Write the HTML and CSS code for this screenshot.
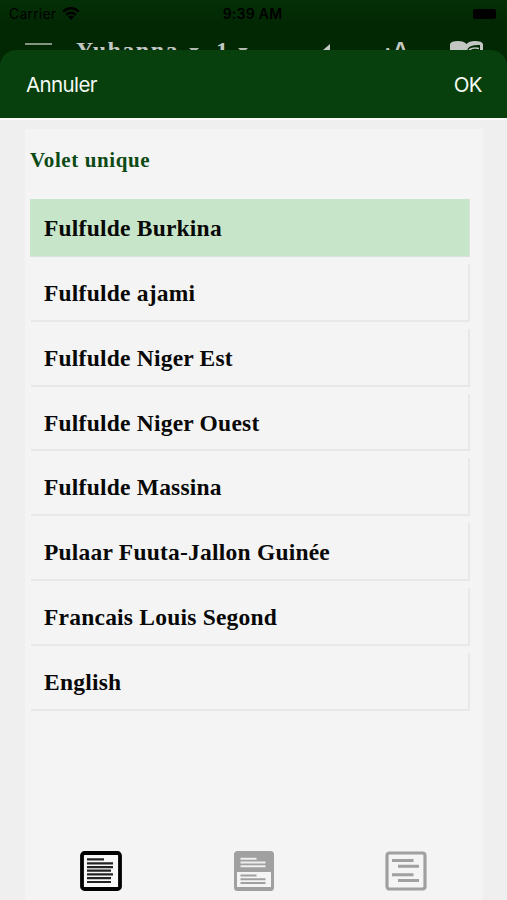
FILE: index.html
```html
<!DOCTYPE html>
<html lang="fr">
<head>
<meta charset="utf-8">
<meta name="viewport" content="width=device-width">
<title>Volet unique</title>
<link rel="stylesheet" href="styles.css">
</head>
<body>
<div class="screen">
  <header class="backdrop">
    <div class="status">
      <div class="carrier"><span>Carrier</span>
        <svg width="18" height="13" viewBox="0 0 18 13"><g fill="none" stroke="#000" stroke-width="2.4"><path d="M1 4.6Q9-2.2 17 4.6"/><path d="M4 7.8Q9 3.6 14 7.8"/></g><path d="M6 9.7Q9 7.5 12 9.7L9 13Z"/></svg>
      </div>
      <div class="time">9:39 AM</div>
      <div class="battery"></div>
    </div>
    <div class="appbar">
      <svg class="menu" width="27" height="20" viewBox="0 0 27 20"><path d="M0 1h27M0 9h27M0 17h27" stroke="#abb9ab" stroke-width="1.7"/></svg>
      <div class="book">Yuhanna<i></i></div>
      <div class="chapter">1<i></i></div>
      <svg class="speaker" width="12" height="20" viewBox="0 0 12 20"><path d="M12 0V20L5 14H0V6H5Z" fill="#c3c7c3"/></svg>
      <div class="size"><small>A</small>A</div>
      <svg class="pages" width="33" height="26" viewBox="0 0 33 26"><path d="M0 3Q1 0 8 0Q14 0 16.500 3Q19 0 25 0Q32 0 33 3V24Q25 20 16.500 25Q9 20 0 24Z" fill="#c3c7c3"/><path d="M17.500 8Q20 3.500 30 4V20Q24 18 17.500 22Z" fill="#022b04"/><path d="M19 9Q23 6 29 7.500" stroke="#c3c7c3" stroke-width="1.600" fill="none"/></svg>
    </div>
  </header>
  <main class="sheet">
    <div class="actions"><span>Annuler</span><span class="ok">OK</span></div>
    <div class="body">
      <section class="panel">
        <h1>Volet unique</h1>
        <ul class="list">
          <li class="selected">Fulfulde Burkina</li>
          <li>Fulfulde ajami</li>
          <li>Fulfulde Niger Est</li>
          <li>Fulfulde Niger Ouest</li>
          <li>Fulfulde Massina</li>
          <li>Pulaar Fuuta-Jallon Guinée</li>
          <li>Francais Louis Segond</li>
          <li>English</li>
        </ul>
        <nav class="tabs">
          <svg width="42" height="40" viewBox="0 0 42 40"><rect x="2" y="2" width="38" height="36" rx="2.5" fill="#f8f8f8" stroke="#000" stroke-width="3.8"/><path d="M7 8.4h17M7 12.3h26M7 16.1h26M7 19.7h24M7 23.4h26M7 27.1h24M7 31h24" stroke="#222" stroke-width="2.2"/></svg>
          <svg width="42" height="40" viewBox="0 0 42 40"><rect x="1" y="0" width="40" height="40" rx="3.5" fill="#a0a0a0"/><path d="M4 21h34v15H4z" fill="#f4f4f4"/><path d="M7.5 7.7h16M7.5 11.5h25M7.5 15.2h25" stroke="#eee" stroke-width="1.9"/><path d="M7.5 24.5h16M7.5 28.3h25M7.5 32h25" stroke="#a0a0a0" stroke-width="1.9"/></svg>
          <svg width="42" height="40" viewBox="0 0 42 40"><rect x="2" y="2" width="38" height="36" rx="2.5" fill="#f4f4f4" stroke="#a0a0a0" stroke-width="3.2"/><path d="M7 9.5h21.5M13 15.2h21M7 23.8h21.5M13 29.4h21" stroke="#a0a0a0" stroke-width="3"/></svg>
        </nav>
      </section>
    </div>
  </main>
</div>
</body>
</html>
```
FILE: styles.css
```css
* { box-sizing: border-box; }
body { margin: 0; font-family: "Liberation Serif", serif; }
.screen { height: 900px; overflow: hidden; background: #022803; display: flex; flex-direction: column; }
.backdrop { height: 50px; flex: none; overflow: hidden; background: linear-gradient(#043007, #022703 50%); }
.status { height: 27px; padding: 0 11px 0 9px; display: grid; grid-template-columns: 1fr auto 1fr; align-items: center; font: 14px Inter, sans-serif; color: #000; }
.carrier { display: flex; align-items: center; gap: 6px; letter-spacing: .2px; }
.time { font-weight: 600; font-size: 14px; letter-spacing: .25px; }
.battery { justify-self: end; width: 23px; height: 10px; border-radius: 2px; background: #000; }
.appbar { display: flex; align-items: flex-start; height: 60px; padding: 11px 25px 0; color: #c3c7c3; font-weight: bold; font-size: 24px; line-height: 24px; }
.appbar svg { flex: none; }
.menu { margin-top: 5px; }
.book, .chapter { display: flex; flex: none; }
.book { width: 140px; margin-left: 24px; letter-spacing: 1.5px; }
.chapter { width: 103px; }
.appbar i { width: 10px; height: 5px; margin: 10px 0 0 10px; background: #b0b8b0; clip-path: polygon(0 0, 100% 0, 50% 100%); }
.speaker { margin-top: 6px; transform: translateX(-1px); }
.size { margin: -1px 0 0 52px; flex: none; width: 67px; font: bold 22px "Liberation Sans", sans-serif; white-space: nowrap; }
.size small { font-size: 13px; }
.pages { margin-top: 3px; }
.sheet { flex: 1; display: flex; flex-direction: column; }
.actions { height: 68px; flex: none; border-radius: 16px 16px 0 0; background: #073f0d; color: #f4faf3; display: flex; justify-content: space-between; align-items: center; padding: 0 25px 0 26px; font: 20.5px "Inter", sans-serif; letter-spacing: -.6px; }
.body { flex: 1; padding: 9px 24px 0 25px; border-top: 2px solid #f8faf8; background: #efefef; display: flex; }
.panel { flex: 1; background: #f4f4f4; display: flex; flex-direction: column; padding: 18px 13px 9px 5px; }
h1 { margin: 0; height: 52px; font-size: 21px; line-height: 26px; letter-spacing: .6px; color: #0d4a14; }
.list { list-style: none; margin: 0; padding: 0; display: grid; grid-auto-rows: 57.85px; row-gap: 7px; }
.list li { padding-left: 13px; border: solid #e8e8e8; border-width: 0 2px 2px 0; margin-left: 1px; font-size: 23.5px; font-weight: bold; line-height: 58px; letter-spacing: .22px; color: #080808; white-space: nowrap; }
.list .selected { margin-left: 0; padding-left: 14px; background: #c7e6c9; border-color: #d9e3d9; border-width: 0 1px 1px 0; }
.tabs { margin-top: auto; padding: 0 43px 0 50px; display: flex; justify-content: space-between; }
```
